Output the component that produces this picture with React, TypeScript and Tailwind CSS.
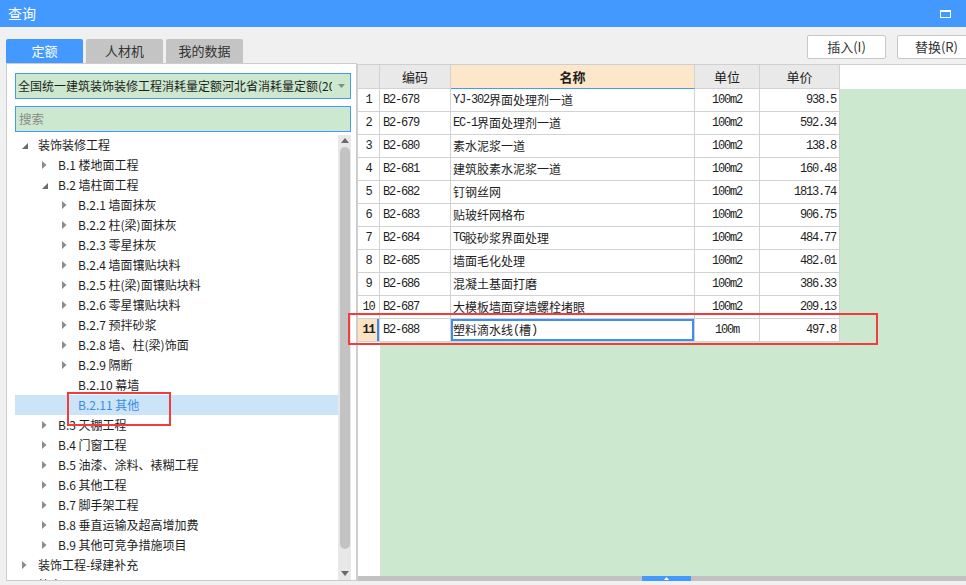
import React from "react";

type Node = { label: string; level: 0 | 1 | 2; state: "open" | "closed" | "leaf"; selected?: boolean };

const tree: Node[] = [
  { label: "装饰装修工程", level: 0, state: "open" },
  { label: "B.1 楼地面工程", level: 1, state: "closed" },
  { label: "B.2 墙柱面工程", level: 1, state: "open" },
  { label: "B.2.1 墙面抹灰", level: 2, state: "closed" },
  { label: "B.2.2 柱(梁)面抹灰", level: 2, state: "closed" },
  { label: "B.2.3 零星抹灰", level: 2, state: "closed" },
  { label: "B.2.4 墙面镶贴块料", level: 2, state: "closed" },
  { label: "B.2.5 柱(梁)面镶贴块料", level: 2, state: "closed" },
  { label: "B.2.6 零星镶贴块料", level: 2, state: "closed" },
  { label: "B.2.7 预拌砂浆", level: 2, state: "closed" },
  { label: "B.2.8 墙、柱(梁)饰面", level: 2, state: "closed" },
  { label: "B.2.9 隔断", level: 2, state: "closed" },
  { label: "B.2.10 幕墙", level: 2, state: "leaf" },
  { label: "B.2.11 其他", level: 2, state: "leaf", selected: true },
  { label: "B.3 天棚工程", level: 1, state: "closed" },
  { label: "B.4 门窗工程", level: 1, state: "closed" },
  { label: "B.5 油漆、涂料、裱糊工程", level: 1, state: "closed" },
  { label: "B.6 其他工程", level: 1, state: "closed" },
  { label: "B.7 脚手架工程", level: 1, state: "closed" },
  { label: "B.8 垂直运输及超高增加费", level: 1, state: "closed" },
  { label: "B.9 其他可竞争措施项目", level: 1, state: "closed" },
  { label: "装饰工程-绿建补充", level: 0, state: "closed" },
  { label: "补充子目", level: 0, state: "closed" },
];

const rows = [
  ["B2-678", "YJ-302界面处理剂一道", "100m2", "938.5"],
  ["B2-679", "EC-1界面处理剂一道", "100m2", "592.34"],
  ["B2-680", "素水泥浆一道", "100m2", "138.8"],
  ["B2-681", "建筑胶素水泥浆一道", "100m2", "160.48"],
  ["B2-682", "钉钢丝网", "100m2", "1813.74"],
  ["B2-683", "贴玻纤网格布", "100m2", "906.75"],
  ["B2-684", "TG胶砂浆界面处理", "100m2", "484.77"],
  ["B2-685", "墙面毛化处理", "100m2", "482.01"],
  ["B2-686", "混凝土基面打磨", "100m2", "386.33"],
  ["B2-687", "大模板墙面穿墙螺栓堵眼", "100m2", "209.13"],
  ["B2-688", "塑料滴水线(槽)", "100m", "497.8"],
];

const indent = { 0: "pl-[7px]", 1: "pl-[27px]", 2: "pl-[47px]" };

const mono = "font-['Liberation_Mono',monospace] text-[12px] tracking-[-1.2px]";

// ascii runs get the narrow mono look, cjk stays in the cjk face
const Mixed = ({ text }: { text: string }) => (
  <>
    {text
      .split(/([\x00-\x7F]+)/)
      .filter(Boolean)
      .map((p, i) =>
        /^[\x00-\x7F]+$/.test(p) ? (
          <span key={i} className={mono}>
            {p}
          </span>
        ) : (
          <span key={i}>{p}</span>
        )
      )}
  </>
);

const Arrow = ({ state }: { state: Node["state"] }) => {
  if (state === "open")
    return (
      <svg width="6" height="6" viewBox="0 0 6 6" className="mt-[2px]">
        <path d="M6 0 L6 6 L0 6 Z" fill="#6b6b6b" />
      </svg>
    );
  if (state === "closed")
    return (
      <svg width="5" height="8" viewBox="0 0 5 8">
        <path d="M0 0 L4.5 4 L0 8 Z" fill="#8c8c8c" />
      </svg>
    );
  return null;
};

const App = () => {
  return (
    <div className="w-[966px] h-[585px] bg-[#f0f0f0] relative overflow-hidden flex flex-col font-['Noto_Sans_CJK_SC',sans-serif] text-[#1e1e1e]">
      <div className="h-[27px] bg-[#4499ff] flex items-center justify-between pl-[8px] pr-[15px] shrink-0">
        <span className="text-[14px] text-white">查询</span>
        <div className="w-[11px] h-[8px] border border-white border-t-2"></div>
      </div>

      <div className="flex h-[558px]">
        {/* left */}
        <div className="w-[357px] shrink-0 flex flex-col pl-[6px] pt-[12px]">
          <div className="flex gap-[3px] h-[24px]">
            <div className="w-[77px] bg-[#4499ff] text-white text-[13px] flex items-center justify-center rounded-t-[2px]">定额</div>
            <div className="w-[77px] bg-[#c4c4c4] text-[#333] text-[13px] flex items-center justify-center rounded-t-[2px]">人材机</div>
            <div className="w-[77px] bg-[#c4c4c4] text-[#333] text-[13px] flex items-center justify-center rounded-t-[2px]">我的数据</div>
          </div>
          <div className="w-[351px] h-[518px] border border-[#cccccc] bg-white flex flex-col pt-[9px] pl-[8px] pr-[5px]">
            <div className="h-[26px] border border-[#4499ff] bg-[#cce8cf] flex items-center shrink-0">
              <div className="flex-1 overflow-hidden whitespace-nowrap text-[12px] pl-[2px] mr-[6px]">全国统一建筑装饰装修工程消耗量定额河北省消耗量定额(2012)</div>
              <svg width="7" height="4" viewBox="0 0 7 4" className="mr-[5px]">
                <path d="M0 0 L7 0 L3.5 4 Z" fill="#8a8a8a" />
              </svg>
            </div>
            <div className="h-[26px] mt-[7px] border border-[#4499ff] bg-[#cce8cf] flex items-center shrink-0 pl-[3px] text-[12.5px] text-[#8a8a8a]">搜索</div>
            <div className="mt-[3px] flex h-[445px] overflow-hidden">
              <div className="w-[323px] overflow-hidden">
                {tree.map((n, i) => (
                  <div
                    key={i}
                    className={`h-[20px] flex items-center whitespace-nowrap text-[12px] ${indent[n.level]} ${n.selected ? "bg-[#cce4f8] text-[#3a8be6]" : ""}`}
                  >
                    <div className="w-[16px] shrink-0 flex items-center">
                      <Arrow state={n.state} />
                    </div>
                    <span className="leading-[20px]">{n.label}</span>
                  </div>
                ))}
              </div>
              <div className="w-[13px] bg-[#e8e8e8] flex flex-col items-center">
                <svg width="8" height="5" viewBox="0 0 8 5" className="mt-[3px]">
                  <path d="M0 5 L8 5 L4 0 Z" fill="#6a6a6a" />
                </svg>
                <div className="w-[10px] h-[402px] mt-[4px] rounded-full bg-[#c3c3c3]"></div>
                <svg width="8" height="5" viewBox="0 0 8 5" className="mt-auto mb-[4px]">
                  <path d="M0 0 L8 0 L4 5 Z" fill="#6a6a6a" />
                </svg>
              </div>
            </div>
          </div>
        </div>

        {/* right */}
        <div className="flex-1 flex flex-col">
          <div className="h-[37px] pt-[8px] pl-[450px] flex gap-[11px] overflow-hidden shrink-0">
            <div className="w-[79px] h-[24px] shrink-0 bg-white border border-[#c8c8c8] rounded-[2px] text-[13px] text-[#333] flex items-center justify-center">插入(I)</div>
            <div className="w-[79px] h-[24px] shrink-0 bg-white border border-[#c8c8c8] rounded-[2px] text-[13px] text-[#333] flex items-center justify-center">替换(R)</div>
          </div>

          <div className="h-[517px] border-t border-l border-[#cfcfcf] flex flex-col bg-white">
            <div className="h-[24px] flex shrink-0 text-[13px]">
              <div className="w-[22px] bg-[#e9e9e9] border-r border-b border-[#d2d2d2]"></div>
              <div className="w-[71px] bg-[#e9e9e9] border-r border-b border-[#d2d2d2] flex items-center justify-center">编码</div>
              <div className="w-[244px] bg-[#fde7ca] border-r border-b border-r-[#d2d2d2] border-b-[#4499ff] flex items-center justify-center font-bold">名称</div>
              <div className="w-[65px] bg-[#e9e9e9] border-r border-b border-[#d2d2d2] flex items-center justify-center">单位</div>
              <div className="w-[80px] bg-[#e9e9e9] border-r border-b border-[#d2d2d2] flex items-center justify-center">单价</div>
              <div className="flex-1 bg-white"></div>
            </div>

            {rows.map((r, i) => {
              const sel = i === 10;
              return (
                <div key={i} className="h-[23px] flex shrink-0 text-[12px]">
                  <div
                    className={`w-[22px] border-r border-b border-[#d2d2d2] flex items-center justify-center ${
                      sel ? "bg-[#fde3c4] font-bold shadow-[inset_-2px_0_0_#3d8ef0]" : "bg-white"
                    }`}
                  >
                    <span className="font-['Liberation_Mono',monospace] text-[12px] tracking-[-1.2px]">{i + 1}</span>
                  </div>
                  <div className="w-[71px] border-r border-b border-[#d2d2d2] flex items-center pl-[3px]">
                    <span className={mono}>{r[0]}</span>
                  </div>
                  <div
                    className={`w-[244px] border-r border-b border-[#d2d2d2] flex items-center pl-[2px] whitespace-nowrap ${
                      sel ? "shadow-[inset_0_0_0_2px_#3d8ef0]" : ""
                    }`}
                  >
                    <Mixed text={r[1]} />
                  </div>
                  <div className="w-[65px] border-r border-b border-[#d2d2d2] flex items-center justify-center">
                    <span className={mono}>{r[2]}</span>
                  </div>
                  <div className="w-[80px] border-r border-b border-[#d2d2d2] flex items-center justify-end pr-[3px]">
                    <span className={mono}>{r[3]}</span>
                  </div>
                  <div className="flex-1 bg-[#cce8cf]"></div>
                </div>
              );
            })}

            <div className="flex-1 flex">
              <div className="w-[22px] bg-white"></div>
              <div className="flex-1 bg-[#cce8cf]"></div>
            </div>
            <div className="h-[5px] bg-[#c2c2c2] shrink-0 flex">
              <div className="ml-[284px] w-[49px] bg-[#4499ff] flex items-center justify-center">
                <svg width="5" height="3" viewBox="0 0 5 3">
                  <path d="M0 3 L5 3 L2.5 0 Z" fill="#fff" />
                </svg>
              </div>
            </div>
          </div>
        </div>
      </div>

      {/* annotation boxes */}
      <div className="absolute left-[67px] top-[392px] w-[104px] h-[34px] border-2 border-[#f23c3c]"></div>
      <div className="absolute left-[348px] top-[313px] w-[530px] h-[32px] border-2 border-[#f23c3c]"></div>
    </div>
  );
};

export default App;
